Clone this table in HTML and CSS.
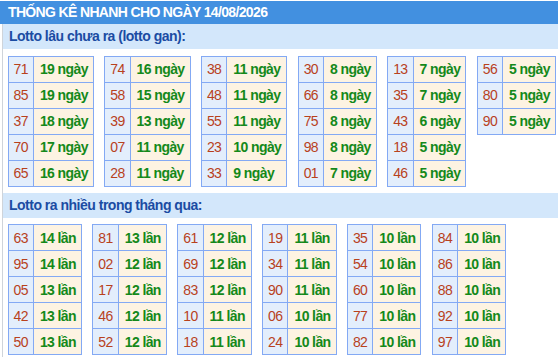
FILE: index.html
```html
<!DOCTYPE html>
<html lang="vi">
<head>
<meta charset="utf-8">
<title>Thống kê nhanh</title>
<link rel="stylesheet" href="styles.css">
</head>
<body>
<div class="title">THỐNG KÊ NHANH CHO NGÀY 14/08/2026</div>
<div class="box">
  <div class="band">Lotto lâu chưa ra (lotto gan):</div>
  <div class="tables">
    <table><tr><td class="n">71</td><td class="v">19 ngày</td></tr><tr><td class="n">85</td><td class="v">19 ngày</td></tr><tr><td class="n">37</td><td class="v">18 ngày</td></tr><tr><td class="n">70</td><td class="v">17 ngày</td></tr><tr><td class="n">65</td><td class="v">16 ngày</td></tr></table>
    <table><tr><td class="n">74</td><td class="v">16 ngày</td></tr><tr><td class="n">58</td><td class="v">15 ngày</td></tr><tr><td class="n">39</td><td class="v">13 ngày</td></tr><tr><td class="n">07</td><td class="v">11 ngày</td></tr><tr><td class="n">28</td><td class="v">11 ngày</td></tr></table>
    <table><tr><td class="n">38</td><td class="v">11 ngày</td></tr><tr><td class="n">48</td><td class="v">11 ngày</td></tr><tr><td class="n">55</td><td class="v">11 ngày</td></tr><tr><td class="n">23</td><td class="v">10 ngày</td></tr><tr><td class="n">33</td><td class="v">9 ngày</td></tr></table>
    <table><tr><td class="n">30</td><td class="v">8 ngày</td></tr><tr><td class="n">66</td><td class="v">8 ngày</td></tr><tr><td class="n">75</td><td class="v">8 ngày</td></tr><tr><td class="n">98</td><td class="v">8 ngày</td></tr><tr><td class="n">01</td><td class="v">7 ngày</td></tr></table>
    <table><tr><td class="n">13</td><td class="v">7 ngày</td></tr><tr><td class="n">35</td><td class="v">7 ngày</td></tr><tr><td class="n">43</td><td class="v">6 ngày</td></tr><tr><td class="n">18</td><td class="v">5 ngày</td></tr><tr><td class="n">46</td><td class="v">5 ngày</td></tr></table>
    <table><tr><td class="n">56</td><td class="v">5 ngày</td></tr><tr><td class="n">80</td><td class="v">5 ngày</td></tr><tr><td class="n">90</td><td class="v">5 ngày</td></tr></table>
  </div>
  <div class="band">Lotto ra nhiều trong tháng qua:</div>
  <div class="tables">
    <table><tr><td class="n">63</td><td class="v">14 lần</td></tr><tr><td class="n">95</td><td class="v">14 lần</td></tr><tr><td class="n">05</td><td class="v">13 lần</td></tr><tr><td class="n">42</td><td class="v">13 lần</td></tr><tr><td class="n">50</td><td class="v">13 lần</td></tr></table>
    <table><tr><td class="n">81</td><td class="v">13 lần</td></tr><tr><td class="n">02</td><td class="v">12 lần</td></tr><tr><td class="n">17</td><td class="v">12 lần</td></tr><tr><td class="n">46</td><td class="v">12 lần</td></tr><tr><td class="n">52</td><td class="v">12 lần</td></tr></table>
    <table><tr><td class="n">61</td><td class="v">12 lần</td></tr><tr><td class="n">69</td><td class="v">12 lần</td></tr><tr><td class="n">83</td><td class="v">12 lần</td></tr><tr><td class="n">10</td><td class="v">11 lần</td></tr><tr><td class="n">18</td><td class="v">11 lần</td></tr></table>
    <table><tr><td class="n">19</td><td class="v">11 lần</td></tr><tr><td class="n">34</td><td class="v">11 lần</td></tr><tr><td class="n">90</td><td class="v">11 lần</td></tr><tr><td class="n">06</td><td class="v">10 lần</td></tr><tr><td class="n">24</td><td class="v">10 lần</td></tr></table>
    <table><tr><td class="n">35</td><td class="v">10 lần</td></tr><tr><td class="n">54</td><td class="v">10 lần</td></tr><tr><td class="n">60</td><td class="v">10 lần</td></tr><tr><td class="n">77</td><td class="v">10 lần</td></tr><tr><td class="n">82</td><td class="v">10 lần</td></tr></table>
    <table><tr><td class="n">84</td><td class="v">10 lần</td></tr><tr><td class="n">86</td><td class="v">10 lần</td></tr><tr><td class="n">88</td><td class="v">10 lần</td></tr><tr><td class="n">92</td><td class="v">10 lần</td></tr><tr><td class="n">97</td><td class="v">10 lần</td></tr></table>
  </div>
</div>
</body>
</html>
```
FILE: styles.css
```css
html, body {
  margin: 0;
  padding: 0;
  background: #fff;
}
body {
  padding-top: 1px;
  font-family: "Liberation Sans", Arial, sans-serif;
  font-size: 14px;
  letter-spacing: -0.6px;
}
.title {
  height: 23px;
  line-height: 23px;
  background: #4290e0;
  color: #fff;
  font-weight: bold;
  padding-left: 8px;
  letter-spacing: -0.65px;
}
.box {
  margin-left: 2px;
  border-left: 1px solid #cfd4da;
  padding-bottom: 3px;
}
.band {
  height: 25px;
  line-height: 25px;
  background: #d3e7fb;
  color: #1b4ca3;
  font-weight: bold;
  padding-left: 6px;
  letter-spacing: -0.5px;
}
.tables {
  display: flex;
  flex-wrap: nowrap;
  align-items: flex-start;
  gap: 10.4px;
  padding: 6.5px 0 6px 4.5px;
}
table {
  border-collapse: collapse;
  flex: none;
}
td {
  border: 1px solid #83a9f4;
  height: 25px;
  padding: 0;
  white-space: nowrap;
}
td.n {
  background: #e3eefc;
  color: #b8411d;
  text-align: center;
  padding: 0 5px;
}
td.v {
  background: #fdf3e2;
  color: #14891a;
  font-weight: bold;
  padding: 0 5px 0 6px;
}
```
